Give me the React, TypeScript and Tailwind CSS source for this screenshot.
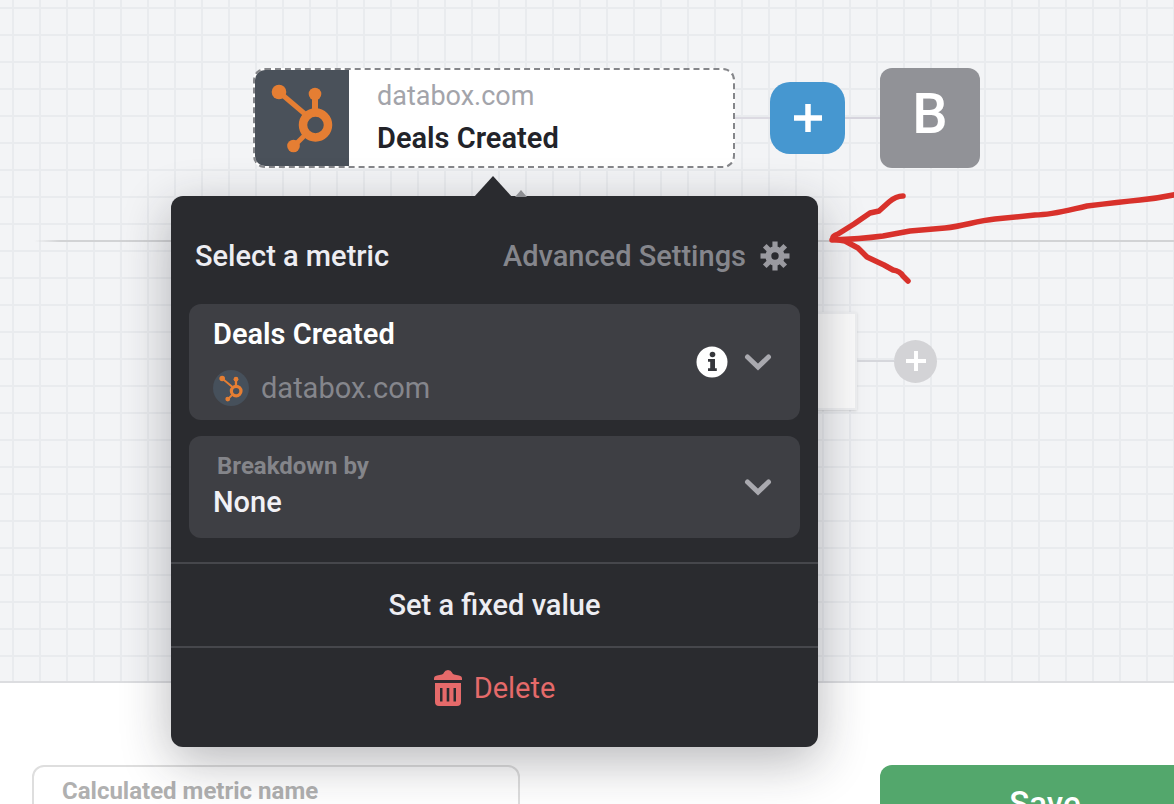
import React from "react";

function HubMark({ className }: { className: string }) {
  return (
    <svg viewBox="0 0 94 94" className={className} fill="none" stroke="#e57e33" aria-hidden="true">
      <path d="M24 22 50 44" strokeWidth="5" />
      <path d="M60 24v20" strokeWidth="6" />
      <path d="M39 76 51 64" strokeWidth="5" />
      <circle cx="60.5" cy="55" r="12.5" strokeWidth="8.5" />
      <g fill="#e57e33" stroke="none">
        <circle cx="24" cy="22" r="7.3" />
        <circle cx="60" cy="24" r="6.3" />
        <circle cx="38.5" cy="76" r="6.3" />
      </g>
    </svg>
  );
}

function GearIcon() {
  const angles = [0, 45, 90, 135, 180, 225, 270, 315];
  return (
    <svg viewBox="-15 -15 30 30" className="size-[30px] shrink-0" aria-hidden="true">
      <circle r="6.7" fill="none" stroke="#9a9aa0" strokeWidth="6" />
      {angles.map((a) => (
        <path key={a} d="M-2.6 -8.5V-14.5H2.6V-8.5Z" fill="#9a9aa0" transform={`rotate(${a})`} />
      ))}
    </svg>
  );
}

function InfoIcon() {
  return (
    <svg viewBox="0 0 32 32" className="size-8" aria-hidden="true">
      <circle cx="16" cy="16" r="15.5" fill="#fff" />
      <g fill="#36373c">
        <circle cx="16.5" cy="8.5" r="2.8" />
        <path d="M12 13h7v9.3h1.8V25H12v-2.7h2.2v-6.6H12Z" />
      </g>
    </svg>
  );
}

function Chevron() {
  return (
    <svg viewBox="0 0 28 18" className="h-[18px] w-7 shrink-0" fill="none" stroke="#a9a9af" strokeWidth="5" strokeLinecap="round" aria-hidden="true">
      <path d="m3.500 4 10.500 10L24.500 4" />
    </svg>
  );
}

function TrashIcon() {
  return (
    <svg viewBox="0 0 28 36" className="h-9 w-7" fill="#e56a6a" aria-hidden="true">
      <path d="M0 10V8.500Q0 6 3 5.500L8 4.500Q9.500 4 10 2.500 11 0 14 0t4 2.500q.5 1.500 2 2l5 1q3 .5 3 3V10Z" />
      <path fillRule="evenodd" d="M1 13h26v19q0 4-4 4H5q-4 0-4-4ZM6 18v13.500h2.500V18Zm6.700 0v13.500h2.600V18Zm6.800 0v13.500H22V18Z" />
    </svg>
  );
}

function PlusIcon({ className }: { className: string }) {
  return (
    <svg viewBox="0 0 28 28" className={className} fill="none" stroke="#fff" strokeWidth="5.500" aria-hidden="true">
      <path d="M14 0v28M0 14h28" />
    </svg>
  );
}

function MetricPopover() {
  return (
    <div role="dialog" aria-label="Select a metric" className="absolute left-[171px] top-[196px] z-10 w-[647px] rounded-xl bg-[#2a2b2f] text-[#ededf2] shadow-[0_14px_50px_rgba(30,30,40,0.32)]">
      <svg viewBox="0 0 58 21" className="absolute -top-5 left-[303px] h-[21px] w-[58px]" aria-hidden="true">
        <path d="M41 21 47 14 53 21Z" fill="#8d8e92" />
        <path d="M0 21 19 0 38 21Z" fill="#2a2b2f" />
      </svg>
      <div className="px-[18px] pb-6">
        <div className="flex h-[108px] items-center justify-between pl-1.5 pr-2.5 pt-3">
          <h2 className="text-[29px] font-medium leading-8">Select a metric</h2>
          <button type="button" className="flex items-center gap-3.5 text-[29px] font-medium leading-8 text-[#85868c]">
            Advanced Settings
            <GearIcon />
          </button>
        </div>

        <div className="flex h-[116px] items-center rounded-xl bg-[#3e3f44] pl-6 pr-7">
          <div className="flex flex-1 flex-col gap-5">
            <select aria-label="Metric" className="w-full appearance-none bg-transparent text-[29px] font-semibold leading-8 text-white">
              <option>Deals Created</option>
            </select>
            <div className="flex items-center gap-3 text-[29px] leading-8 text-[#85868c]">
              <span className="flex size-9 items-center justify-center rounded-full bg-[#46505b]">
                <HubMark className="size-9" />
              </span>
              databox.com
            </div>
          </div>
          <button type="button" aria-label="Metric details" className="mr-4">
            <InfoIcon />
          </button>
          <Chevron />
        </div>

        <div className="mt-4 flex h-[102px] items-center rounded-xl bg-[#3e3f44] pl-6 pr-7">
          <div className="flex flex-1 flex-col gap-1.5 pb-1">
            <label htmlFor="breakdown" className="pl-1 text-2xl font-bold leading-7 text-[#84858a]">
              Breakdown by
            </label>
            <select id="breakdown" className="w-full appearance-none bg-transparent text-[29px] font-medium leading-8 text-[#f1f1f6]">
              <option>None</option>
            </select>
          </div>
          <Chevron />
        </div>
      </div>

      <button type="button" className="block h-[84px] w-full border-t-2 border-[#46474c] text-[29px] font-medium leading-8">
        Set a fixed value
      </button>
      <button type="button" className="flex h-[101px] w-full items-center justify-center gap-3 border-t-2 border-[#46474c] pb-5 text-[29px] leading-8 text-[#e56a6a]">
        <TrashIcon />
        Delete
      </button>
    </div>
  );
}

function ArrowMark() {
  return (
    <svg viewBox="824 184 350 104" className="absolute left-[824px] top-[184px] z-20 h-[104px] w-[350px]" fill="none" stroke="#d8312b" strokeWidth="5.500" strokeLinecap="round" strokeLinejoin="round" aria-hidden="true">
      <path d="M1178 194Q1160 198 1140 200T1087 206C1065 211 1052 215 1035 215L995 219C975 221 965 226 945 228L910 231 883 236Q860 239 832 240" />
      <path d="M903 196Q896 196 889 202L879 211 870 213 854 224 838 234Q832 236 833 239L845 241 858 248 867 257 884 265 893 270Q900 271 903 276L908 281" />
    </svg>
  );
}

export default function App() {
  return (
    <main className="relative flex h-screen flex-col overflow-hidden bg-white font-['Roboto',sans-serif]">
      <section className="h-[683px] shrink-0 border-b-2 border-[#dcdde0] bg-[#f3f4f6] bg-[linear-gradient(to_right,#e9ebee_2px,transparent_2px),linear-gradient(to_bottom,#e9ebee_2px,transparent_2px)] bg-[size:27px_27px] bg-[position:12px_7px]">
        <div className="flex h-[240px] items-start pl-[253px] pt-[68px]">
          <div className="flex h-[100px] w-[482px] shrink-0 overflow-hidden rounded-xl border-2 border-dashed border-[#85868a] bg-white">
            <div className="w-[94px] shrink-0 bg-[#4a515a]">
              <HubMark className="size-[94px]" />
            </div>
            <div className="flex flex-col gap-2.5 pl-7 pt-2.5">
              <span className="text-[27px] leading-8 text-[#a3a4aa]">databox.com</span>
              <span className="text-[29px] font-semibold leading-8 text-[#222329]">Deals Created</span>
            </div>
          </div>
          <div className="flex h-[100px] shrink-0 items-center">
            <span className="h-0.5 w-[35px] bg-[#dcdae2]" />
            <button type="button" aria-label="Add operator" className="flex h-[72px] w-[75px] items-center justify-center rounded-[20px] bg-[#4697d0]">
              <PlusIcon className="size-7" />
            </button>
            <span className="h-0.5 w-[35px] bg-[#d6d4dd]" />
            <button type="button" className="h-[100px] w-[100px] rounded-xl bg-[#919297] pb-2 text-[56px] font-medium leading-none text-white">
              B
            </button>
          </div>
        </div>
        <hr className="h-0.5 border-0 bg-[linear-gradient(to_right,transparent_34px,#d2d3d5_60px)]" />
        <div className="flex items-center pl-[253px] pt-[70px]">
          <div className="h-[98px] w-[604px] shrink-0 border-2 border-[#eeeff1] bg-[#fbfbfb] shadow-sm" />
          <span className="h-0.5 w-[37px] bg-[#d6d7dc]" />
          <button type="button" aria-label="Add value" className="flex size-[43px] items-center justify-center rounded-full bg-[#d3d3d6]">
            <PlusIcon className="size-5" />
          </button>
        </div>
      </section>

      <footer className="flex shrink-0 items-start pl-8 pt-[82px]">
        <div className="flex h-[100px] w-[488px] shrink-0 flex-col rounded-xl border-2 border-[#dedede] px-7 pt-2.5">
          <label htmlFor="metric-name" className="text-2xl font-bold leading-7 text-[#b0b0b0]">
            Calculated metric name
          </label>
          <input id="metric-name" type="text" className="w-full bg-transparent text-[29px] leading-8 outline-none" />
        </div>
        <button type="button" className="ml-[360px] h-[78px] w-[330px] shrink-0 rounded-xl bg-[#53a76c] text-[33px] font-medium leading-8 text-white">
          Save
        </button>
      </footer>

      <MetricPopover />
      <ArrowMark />
    </main>
  );
}
